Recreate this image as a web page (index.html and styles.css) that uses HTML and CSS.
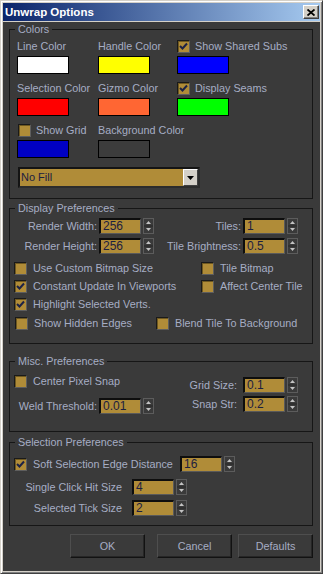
FILE: index.html
```html
<!DOCTYPE html>
<html lang="en">
<head>
  <meta charset="UTF-8">
  <title>Unwrap Options</title>
  <link rel="stylesheet" href="styles.css">
</head>
<body>
  <div class="window">
    <div class="titlebar">
      <span class="title">Unwrap Options</span>
      <span class="close">
        <svg width="8" height="7" viewBox="0 0 8 7"><path d="M0.5 0.5 L7.5 6.5 M7.5 0.5 L0.5 6.5" stroke="#000" stroke-width="1.8"/></svg>
      </span>
    </div>

    <div class="content">

      <!-- Colors -->
      <fieldset class="group">
        <legend>Colors</legend>
        <div class="colors-body">
          <div class="color-grid">
            <div class="cell"><span class="lbl">Line Color</span><span class="swatch sw-white"></span></div>
            <div class="cell"><span class="lbl">Handle Color</span><span class="swatch sw-yellow"></span></div>
            <div class="cell">
              <span class="chk tight"><span class="box on"><svg width="9" height="9" viewBox="0 0 9 9"><path d="M1 4 L3.5 6.5 L8 1.5" fill="none" stroke="#1c2246" stroke-width="2"/></svg></span>Show Shared Subs</span>
              <span class="swatch sw-blue"></span>
            </div>

            <div class="cell"><span class="lbl">Selection Color</span><span class="swatch sw-red"></span></div>
            <div class="cell"><span class="lbl">Gizmo Color</span><span class="swatch sw-orange"></span></div>
            <div class="cell">
              <span class="chk tight"><span class="box on"><svg width="9" height="9" viewBox="0 0 9 9"><path d="M1 4 L3.5 6.5 L8 1.5" fill="none" stroke="#1c2246" stroke-width="2"/></svg></span>Display Seams</span>
              <span class="swatch sw-green"></span>
            </div>

            <div class="cell">
              <span class="chk tight grid-chk"><span class="box"></span>Show Grid</span>
              <span class="swatch sw-navy"></span>
            </div>
            <div class="cell"><span class="lbl">Background Color</span><span class="swatch sw-bg"></span></div>
          </div>

          <div class="dropdown">
            <span class="dd-text">No Fill</span>
            <span class="dd-btn"><svg width="7" height="4" viewBox="0 0 7 4"><path d="M0 0 H7 L3.5 4 Z" fill="#000"/></svg></span>
          </div>
        </div>
      </fieldset>

      <!-- Display Preferences -->
      <fieldset class="group display">
        <legend>Display Preferences</legend>
        <div class="display-body">
          <div class="field-row">
            <span class="flbl w87">Render Width:</span>
            <span class="spin"><span class="field">256</span><svg class="spinner" width="11" height="16" viewBox="0 0 11 16"><rect x="0.5" y="0.5" width="10" height="15" fill="#3a3a3a" stroke="#5c5c5c"/><line x1="1" y1="8" x2="10" y2="8" stroke="#262626"/><path d="M5.5 3 L8 6 H3 Z" fill="#c4c4c4"/><path d="M3 10 H8 L5.5 13 Z" fill="#c4c4c4"/></svg></span>
            <span class="flbl w87">Tiles:</span>
            <span class="spin"><span class="field">1</span><svg class="spinner" width="11" height="16" viewBox="0 0 11 16"><rect x="0.5" y="0.5" width="10" height="15" fill="#3a3a3a" stroke="#5c5c5c"/><line x1="1" y1="8" x2="10" y2="8" stroke="#262626"/><path d="M5.5 3 L8 6 H3 Z" fill="#c4c4c4"/><path d="M3 10 H8 L5.5 13 Z" fill="#c4c4c4"/></svg></span>
          </div>
          <div class="field-row">
            <span class="flbl w87">Render Height:</span>
            <span class="spin"><span class="field">256</span><svg class="spinner" width="11" height="16" viewBox="0 0 11 16"><rect x="0.5" y="0.5" width="10" height="15" fill="#3a3a3a" stroke="#5c5c5c"/><line x1="1" y1="8" x2="10" y2="8" stroke="#262626"/><path d="M5.5 3 L8 6 H3 Z" fill="#c4c4c4"/><path d="M3 10 H8 L5.5 13 Z" fill="#c4c4c4"/></svg></span>
            <span class="flbl w87">Tile Brightness:</span>
            <span class="spin"><span class="field">0.5</span><svg class="spinner" width="11" height="16" viewBox="0 0 11 16"><rect x="0.5" y="0.5" width="10" height="15" fill="#3a3a3a" stroke="#5c5c5c"/><line x1="1" y1="8" x2="10" y2="8" stroke="#262626"/><path d="M5.5 3 L8 6 H3 Z" fill="#c4c4c4"/><path d="M3 10 H8 L5.5 13 Z" fill="#c4c4c4"/></svg></span>
          </div>

          <div class="checks">
            <div class="crow">
              <span class="chk c1"><span class="box"></span>Use Custom Bitmap Size</span>
              <span class="chk"><span class="box"></span>Tile Bitmap</span>
            </div>
            <div class="crow">
              <span class="chk c1"><span class="box on"><svg width="9" height="9" viewBox="0 0 9 9"><path d="M1 4 L3.5 6.5 L8 1.5" fill="none" stroke="#1c2246" stroke-width="2"/></svg></span>Constant Update In Viewports</span>
              <span class="chk"><span class="box"></span>Affect Center Tile</span>
            </div>
            <div class="crow">
              <span class="chk c1"><span class="box on"><svg width="9" height="9" viewBox="0 0 9 9"><path d="M1 4 L3.5 6.5 L8 1.5" fill="none" stroke="#1c2246" stroke-width="2"/></svg></span>Highlight Selected Verts.</span>
            </div>
            <div class="crow last">
              <span class="chk c1"><span class="box"></span>Show Hidden Edges</span>
              <span class="chk"><span class="box"></span>Blend Tile To Background</span>
            </div>
          </div>
        </div>
      </fieldset>

      <!-- Misc. Preferences -->
      <fieldset class="group misc">
        <legend>Misc. Preferences</legend>
        <div class="misc-body">
          <div class="misc-left">
            <span class="chk"><span class="box"></span>Center Pixel Snap</span>
            <div class="field-row weld">
              <span class="flbl w83">Weld Threshold:</span>
              <span class="spin"><span class="field">0.01</span><svg class="spinner" width="11" height="16" viewBox="0 0 11 16"><rect x="0.5" y="0.5" width="10" height="15" fill="#3a3a3a" stroke="#5c5c5c"/><line x1="1" y1="8" x2="10" y2="8" stroke="#262626"/><path d="M5.5 3 L8 6 H3 Z" fill="#c4c4c4"/><path d="M3 10 H8 L5.5 13 Z" fill="#c4c4c4"/></svg></span>
            </div>
          </div>
          <div class="misc-right">
            <div class="field-row">
              <span class="flbl gap6">Grid Size:</span>
              <span class="spin"><span class="field">0.1</span><svg class="spinner" width="11" height="16" viewBox="0 0 11 16"><rect x="0.5" y="0.5" width="10" height="15" fill="#3a3a3a" stroke="#5c5c5c"/><line x1="1" y1="8" x2="10" y2="8" stroke="#262626"/><path d="M5.5 3 L8 6 H3 Z" fill="#c4c4c4"/><path d="M3 10 H8 L5.5 13 Z" fill="#c4c4c4"/></svg></span>
            </div>
            <div class="field-row">
              <span class="flbl gap6">Snap Str:</span>
              <span class="spin"><span class="field">0.2</span><svg class="spinner" width="11" height="16" viewBox="0 0 11 16"><rect x="0.5" y="0.5" width="10" height="15" fill="#3a3a3a" stroke="#5c5c5c"/><line x1="1" y1="8" x2="10" y2="8" stroke="#262626"/><path d="M5.5 3 L8 6 H3 Z" fill="#c4c4c4"/><path d="M3 10 H8 L5.5 13 Z" fill="#c4c4c4"/></svg></span>
            </div>
          </div>
        </div>
      </fieldset>

      <!-- Selection Preferences -->
      <fieldset class="group sel">
        <legend>Selection Preferences</legend>
        <div class="sel-body">
          <div class="field-row">
            <span class="chk soft"><span class="box on"><svg width="9" height="9" viewBox="0 0 9 9"><path d="M1 4 L3.5 6.5 L8 1.5" fill="none" stroke="#1c2246" stroke-width="2"/></svg></span>Soft Selection Edge Distance</span>
            <span class="spin"><span class="field">16</span><svg class="spinner" width="11" height="16" viewBox="0 0 11 16"><rect x="0.5" y="0.5" width="10" height="15" fill="#3a3a3a" stroke="#5c5c5c"/><line x1="1" y1="8" x2="10" y2="8" stroke="#262626"/><path d="M5.5 3 L8 6 H3 Z" fill="#c4c4c4"/><path d="M3 10 H8 L5.5 13 Z" fill="#c4c4c4"/></svg></span>
          </div>
          <div class="field-row hit">
            <span class="flbl w112">Single Click Hit Size</span>
            <span class="spin"><span class="field">4</span><svg class="spinner" width="11" height="16" viewBox="0 0 11 16"><rect x="0.5" y="0.5" width="10" height="15" fill="#3a3a3a" stroke="#5c5c5c"/><line x1="1" y1="8" x2="10" y2="8" stroke="#262626"/><path d="M5.5 3 L8 6 H3 Z" fill="#c4c4c4"/><path d="M3 10 H8 L5.5 13 Z" fill="#c4c4c4"/></svg></span>
          </div>
          <div class="field-row tick">
            <span class="flbl w112">Selected Tick Size</span>
            <span class="spin"><span class="field">2</span><svg class="spinner" width="11" height="16" viewBox="0 0 11 16"><rect x="0.5" y="0.5" width="10" height="15" fill="#3a3a3a" stroke="#5c5c5c"/><line x1="1" y1="8" x2="10" y2="8" stroke="#262626"/><path d="M5.5 3 L8 6 H3 Z" fill="#c4c4c4"/><path d="M3 10 H8 L5.5 13 Z" fill="#c4c4c4"/></svg></span>
          </div>
        </div>
      </fieldset>

      <div class="buttons">
        <span class="btn">OK</span>
        <span class="btn cancel">Cancel</span>
        <span class="btn defaults">Defaults</span>
      </div>

    </div>
  </div>
</body>
</html>
```

FILE: styles.css
```css
body {
  margin: 0;
  background: #d4d0c8;
}
.window {
  width: 323px;
  height: 574px;
  box-sizing: border-box;
  border: 1px solid;
  border-color: #d4d0c8 #404040 #404040 #d4d0c8;
  box-shadow: inset 1px 1px #ffffff, inset -1px -1px #808080;
  padding: 2px;
  background: #d4d0c8;
  display: flex;
  flex-direction: column;
  font-family: "Liberation Sans", Arial, sans-serif;
  font-size: 10.8px;
  color: #a6adc4;
}
.titlebar {
  height: 18px;
  margin-bottom: 1px;
  padding-left: 2px;
  display: flex;
  align-items: center;
  background: linear-gradient(to right, #0a246a, #a6caf0);
}
.title {
  flex: 1;
  color: #fff;
  font-weight: bold;
  font-size: 11.5px;
}
.close {
  width: 16px;
  height: 14px;
  box-sizing: border-box;
  margin-right: 1px;
  background: #d4d0c8;
  border: 1px solid;
  border-color: #ffffff #404040 #404040 #ffffff;
  box-shadow: inset -1px -1px #808080;
  display: flex;
  align-items: center;
  justify-content: center;
}
.content {
  flex: 1;
  background: #3a3a3a;
  padding: 1px 7px 0 6px;
}

/* group boxes */
.group {
  margin: 0;
  padding: 0;
  border: 1px solid #161616;
  min-width: 0;
}
.group legend {
  margin-left: 5px;
  padding: 0 3px;
  line-height: 13px;
}
.display { margin-top: 3px; }
.misc { margin-top: 11px; }
.sel { margin-top: 4px; }

/* colors */
.colors-body {
  padding: 4px 0 10px 7px;
}
.color-grid {
  display: grid;
  grid-template-columns: 81px 79px 1fr;
  row-gap: 8px;
}
.cell {
  display: flex;
  flex-direction: column;
  align-items: flex-start;
  gap: 3px;
}
.lbl {
  line-height: 13px;
  white-space: nowrap;
}
.swatch {
  width: 52px;
  height: 18px;
  box-sizing: border-box;
  border: 1px solid #000;
}
.sw-white { background: #ffffff; }
.sw-yellow { background: #ffff00; }
.sw-blue { background: #0000ff; }
.sw-red { background: #ff0000; }
.sw-orange { background: #ff6633; }
.sw-green { background: #00ff00; }
.sw-navy { background: #0000c4; }
.sw-bg { background: #3c3c3c; }
.grid-chk { margin-left: 1px; }

.dropdown {
  margin: 9px 0 0 1px;
  width: 182px;
  height: 21px;
  box-sizing: border-box;
  display: flex;
  border-style: solid;
  border-width: 2px;
  border-color: #141414 #2c2c2c #2c2c2c #141414;
}
.dd-text {
  flex: 1;
  background: #b08c38;
  color: #1c2040;
  font-size: 11px;
  line-height: 17px;
  padding-left: 1px;
}
.dd-btn {
  width: 15px;
  box-sizing: border-box;
  background: #d4d0c8;
  border: 1px solid;
  border-color: #ffffff #404040 #404040 #ffffff;
  display: flex;
  align-items: center;
  justify-content: center;
}

/* checkboxes */
.chk {
  display: flex;
  align-items: center;
  gap: 6px;
  white-space: nowrap;
  line-height: 13px;
  height: 13px;
}
.chk.tight { gap: 5px; }
.box {
  width: 13px;
  height: 13px;
  flex: none;
  box-sizing: border-box;
  background: #b08c38;
  border: 1px solid;
  border-color: #1a1a1a #5e5e5e #5e5e5e #1a1a1a;
  box-shadow: inset 1px 1px #6e5820;
  display: flex;
  align-items: center;
  justify-content: center;
}

/* number fields */
.field-row {
  display: flex;
  align-items: center;
  height: 16px;
}
.flbl {
  text-align: right;
  white-space: nowrap;
  margin-right: 2px;
}
.w87 { width: 87px; }
.w83 { width: 83px; }
.w112 { width: 112px; margin-right: 10px; }
.gap6 { margin-right: 6px; }
.spin {
  display: flex;
  align-items: center;
  gap: 2px;
}
.field {
  width: 42px;
  height: 16px;
  box-sizing: border-box;
  background: #b08c38;
  border-style: solid;
  border-width: 2px 1px 1px 2px;
  border-color: #0e0e0e #5a5a5a #5a5a5a #0e0e0e;
  color: #1c2040;
  font-size: 12px;
  line-height: 13px;
  padding-left: 2px;
}
.spinner { display: block; }

/* display */
.display-body {
  padding: 3px 0 13px 0;
}
.display-body .field-row + .field-row { margin-top: 4px; }
.checks {
  margin-top: 8px;
  padding-left: 4px;
}
.crow {
  display: flex;
  height: 13px;
}
.crow + .crow { margin-top: 5px; }
.crow .c1 { width: 187px; }
.crow.last { margin-top: 6px; }
.crow.last .c1 { width: 141px; margin-left: 1px; }

/* misc */
.misc-body {
  display: flex;
  justify-content: space-between;
  padding: 0 14px 17px 4px;
}
.misc-left { padding-top: 7px; }
.weld { margin-top: 10px; }
.misc-right { padding-top: 9px; }
.misc-right .field-row { justify-content: flex-end; }
.misc-right .field-row + .field-row { margin-top: 3px; }

/* selection */
.sel-body {
  padding: 7px 0 9px 0;
}
.soft {
  width: 166px;
  margin-left: 4px;
}
.hit { margin-top: 7px; }
.tick { margin-top: 5px; }

/* buttons */
.buttons {
  display: flex;
  justify-content: flex-end;
  margin-top: 8px;
}
.btn {
  width: 75px;
  height: 24px;
  box-sizing: border-box;
  border: 1px solid;
  border-color: #4e4e4e #121212 #121212 #4e4e4e;
  box-shadow: inset -1px -1px #262626;
  display: flex;
  align-items: center;
  justify-content: center;
}
.cancel { margin-left: 12px; }
.defaults { margin-left: 6px; }
```
